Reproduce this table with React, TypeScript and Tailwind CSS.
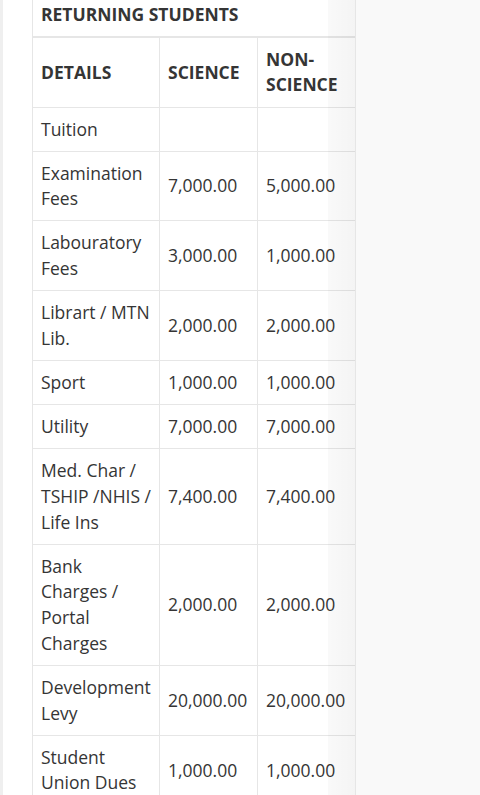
import React from "react";

const rows: [React.ReactNode, string, string][] = [
  ["Tuition", "", ""],
  ["Examination Fees", "7,000.00", "5,000.00"],
  ["Labouratory Fees", "3,000.00", "1,000.00"],
  ["Librart / MTN Lib.", "2,000.00", "2,000.00"],
  ["Sport", "1,000.00", "1,000.00"],
  ["Utility", "7,000.00", "7,000.00"],
  ["Med. Char / TSHIP /NHIS / Life Ins", "7,400.00", "7,400.00"],
  [<>Bank<br />Charges / Portal Charges</>, "2,000.00", "2,000.00"],
  ["Development Levy", "20,000.00", "20,000.00"],
  ["Student Union Dues", "1,000.00", "1,000.00"],
];

const cell = "border border-[#e6e6e6] px-2 pt-[9px] pb-[8.4px] align-middle text-left";

const App = () => {
  return (
    <div className="flex min-h-[795px] w-[480px] overflow-hidden bg-[#f9f9f9] font-['Open_Sans',sans-serif] text-[17.5px] leading-[25.7px] text-[#353535]">
      <div className="w-[3px] shrink-0 bg-[#efefef]" />
      <div className="w-[352px] shrink-0 bg-white pl-[29px]">
        <div className="relative w-[323px]">
          <table className="w-[323px] table-fixed border-collapse">
            <colgroup>
              <col className="w-[127px]" />
              <col className="w-[98px]" />
              <col className="w-[98px]" />
            </colgroup>
            <thead>
              <tr>
                <th colSpan={3} className="border border-[#e6e6e6] border-t-0 border-b-2 px-2 pt-[2px] pb-[8px] text-left font-bold">
                  RETURNING STUDENTS
                </th>
              </tr>
              <tr>
                <th className={`${cell} font-bold`}>DETAILS</th>
                <th className={`${cell} font-bold`}>SCIENCE</th>
                <th className={`${cell} font-bold`}>NON-SCIENCE</th>
              </tr>
            </thead>
            <tbody>
              {rows.map(([d, s, n], i) => (
                <tr key={i}>
                  <td className={`${cell} pr-[4px]`}>{d}</td>
                  <td className={cell}>{s}</td>
                  <td className={cell}>{n}</td>
                </tr>
              ))}
            </tbody>
          </table>
          {/* scroll shadow at the right edge */}
          <div className="pointer-events-none absolute top-0 right-0 bottom-0 w-[27px] bg-[linear-gradient(90deg,rgba(0,0,0,0.025),rgba(0,0,0,0.045))]" />
        </div>
      </div>
    </div>
  );
};

export default App;
